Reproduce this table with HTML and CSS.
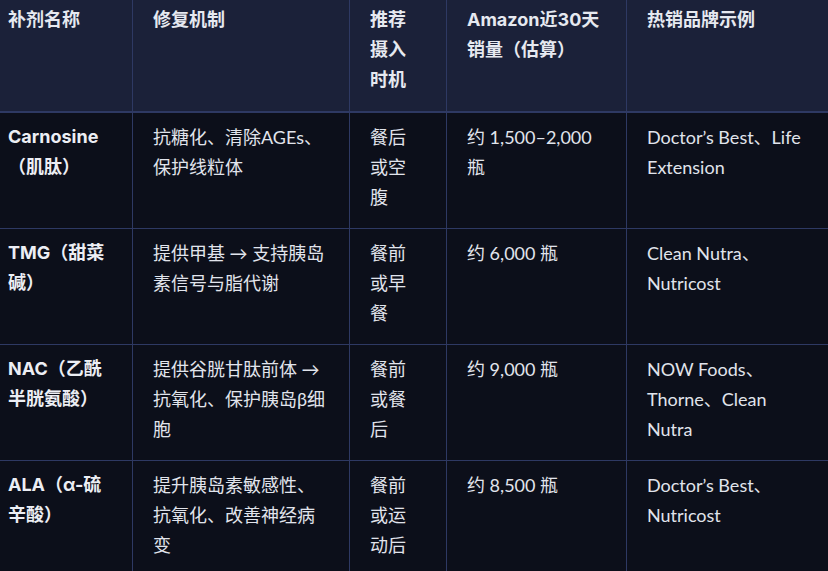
FILE: index.html
```html
<!DOCTYPE html>
<html lang="zh-CN">
<head>
<meta charset="utf-8">
<title>补剂表</title>
<link rel="stylesheet" href="styles.css">
</head>
<body>
<div class="wrap">
<table class="tbl">
  <colgroup>
    <col class="c1"><col class="c2"><col class="c3"><col class="c4"><col class="c5">
  </colgroup>
  <thead>
    <tr>
      <th>补剂名称</th>
      <th>修复机制</th>
      <th class="narrow">推荐摄入时机</th>
      <th>Amazon近30天销量（估算）</th>
      <th>热销品牌示例</th>
    </tr>
  </thead>
  <tbody>
    <tr>
      <td class="name">Carnosine（肌肽）</td>
      <td>抗糖化、清除AGEs、保护线粒体</td>
      <td class="narrow">餐后或空腹</td>
      <td>约 1,500–2,000 瓶</td>
      <td>Doctor’s Best、Life Extension</td>
    </tr>
    <tr>
      <td class="name">TMG（甜菜碱）</td>
      <td>提供甲基 → 支持胰岛素信号与脂代谢</td>
      <td class="narrow">餐前或早餐</td>
      <td>约 6,000 瓶</td>
      <td>Clean Nutra、Nutricost</td>
    </tr>
    <tr>
      <td class="name">NAC（乙酰半胱氨酸）</td>
      <td>提供谷胱甘肽前体 → 抗氧化、保护胰岛β细胞</td>
      <td class="narrow">餐前或餐后</td>
      <td>约 9,000 瓶</td>
      <td>NOW Foods、Thorne、Clean Nutra</td>
    </tr>
    <tr>
      <td class="name">ALA（α-硫辛酸）</td>
      <td>提升胰岛素敏感性、抗氧化、改善神经病变</td>
      <td class="narrow">餐前或运动后</td>
      <td>约 8,500 瓶</td>
      <td>Doctor’s Best、Nutricost</td>
    </tr>
  </tbody>
</table>
</div>
</body>
</html>
```

FILE: styles.css
```css
html, body {
  margin: 0;
  padding: 0;
  background: #0c0f1a;
}
.wrap {
  width: 828px;
  height: 571px;
  overflow: hidden;
}
.tbl {
  margin: -5px 0 0 -13px;
  border-collapse: collapse;
  table-layout: fixed;
  width: 846px;
  font-family: Lato, "Noto Sans CJK SC", sans-serif;
  font-size: 18px;
  line-height: 30px;
  color: #e1e4ec;
}
.c1 { width: 145px; }
.c2 { width: 217px; }
.c3 { width: 97px; }
.c4 { width: 180px; }
.c5 { width: 207px; }
.tbl th, .tbl td {
  border: 1px solid #2e3963;
  padding: 9px 20px 16px 20px;
  text-align: left;
  vertical-align: top;
  word-break: normal;
}
.tbl th {
  background: #1b2139;
  font-family: Inter, "Noto Sans CJK SC", sans-serif;
  font-weight: 700;
  color: #e6e9f0;
}
.tbl thead th {
  border-bottom: 2px solid #2e3963;
}
.tbl td.name {
  font-family: Inter, "Noto Sans CJK SC", sans-serif;
  font-weight: 700;
  color: #eceef4;
}
.tbl .narrow {
  padding-right: 24px;
}
```
